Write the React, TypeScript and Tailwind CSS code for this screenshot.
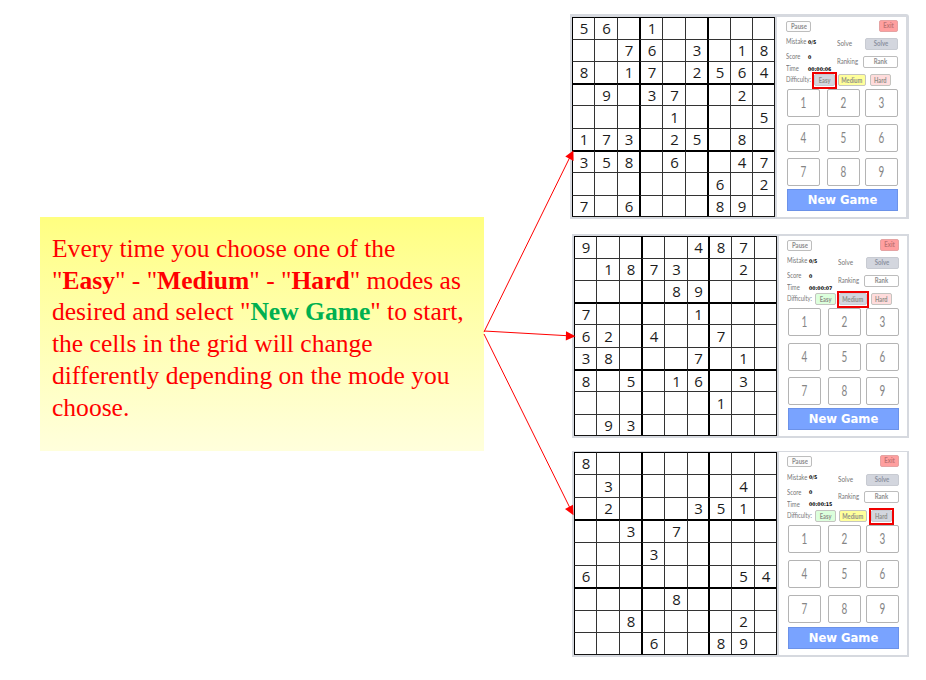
import type { ReactNode } from "react";

type Mode = "Easy" | "Medium" | "Hard";

type BoardData = {
  mode: Mode;
  time: string;
  rows: string[];
  frame: string;
  colTracks: string;
  rowTracks: string;
  panel: string;
  info: string;
  keys: string;
};

const boards: BoardData[] = [
  {
    mode: "Easy",
    time: "00:00:06",
    rows: ["56.1.....", "..76.3.18", "8.17.2564", ".9.37..2.", "....1...5", "173.25.8.", "358.6..47", "......6.2", "7.6...89."],
    frame: "mt-[14px] w-[339px] h-[205px] pl-[2px] pt-[3px] rounded-tr-[3px]",
    colTracks: "grid-cols-[22px_23px_22px_23px_23px_22px_23px_22px_22px]",
    rowTracks: "grid-rows-[22px_22px_22px_22px_23px_22px_22px_23px_21px]",
    panel: "ml-[2px] w-[129px] h-[200px] pl-[10px]",
    info: "h-[42px]",
    keys: "mt-[3px] mb-[3px] gap-y-[6.5px]",
  },
  {
    mode: "Medium",
    time: "00:00:07",
    rows: ["9....487.", ".1873..2.", "....89...", "7....1...", "62.4..7..", "38...7.1.", "8.5.16.3.", "......1..", ".93......"],
    frame: "mt-[15px] w-[337px] h-[204px] pl-[2px] pt-[2px]",
    colTracks: "grid-cols-[22px_23px_22px_23px_23px_21px_23px_23px_22px]",
    rowTracks: "grid-rows-[22px_22px_22px_22px_23px_22px_22px_23px_21px]",
    panel: "ml-[2px] w-[128px] h-[200px] pl-[9px]",
    info: "h-[42px]",
    keys: "mt-[3px] mb-[3px] gap-y-[6.5px]",
  },
  {
    mode: "Hard",
    time: "00:00:15",
    rows: ["8........", ".3.....4.", ".2...351.", "..3.7....", "...3.....", "6......54", "....8....", "..8....2.", "...6..89."],
    frame: "mt-[13px] w-[337px] h-[206px] pl-[2px] pt-[1px]",
    colTracks: "grid-cols-[22px_23px_22px_23px_23px_21px_23px_23px_22px]",
    rowTracks: "grid-rows-[22px_23px_22px_23px_23px_22px_23px_22px_22px]",
    panel: "ml-[2px] w-[128px] h-[203px] pl-[9px]",
    info: "h-[43px] pt-[0.5px]",
    keys: "mt-[3px] mb-[4px] gap-y-[7px]",
  },
];

function Narrow({ children, className = "" }: { children: ReactNode; className?: string }) {
  return <span className={`inline-block whitespace-nowrap ${className}`}>{children}</span>;
}

function SudokuGrid({ data }: { data: BoardData }) {
  return (
    <div className={`grid shrink-0 border-r border-b border-[#151515] bg-white ${data.colTracks} ${data.rowTracks}`}>
      {data.rows.flatMap((row, r) =>
        row.split("").map((d, c) => (
          <div
            key={`${r}-${c}`}
            className={`flex items-center justify-center overflow-hidden pl-px font-['Open_Sans','Noto_Sans',sans-serif] text-[15px] leading-none text-[#1c1c1c] ${
              c === 3 || c === 6 ? "border-l-2 border-l-black" : c === 0 ? "border-l border-l-black" : "border-l border-l-[#333]"
            } ${r === 3 || r === 6 ? "border-t-2 border-t-black" : r === 0 ? "border-t border-t-black" : "border-t border-t-[#333]"}`}
          >
            {d === "." ? "" : d}
          </div>
        )),
      )}
    </div>
  );
}

function ModeButton({ name, active, className }: { name: Mode; active: boolean; className: string }) {
  const tint = { Easy: "bg-[#dcffdc]", Medium: "bg-[#ffff9b]", Hard: "bg-[#ffdcdc]" }[name];
  return (
    <div
      className={`relative flex h-[12px] items-center justify-center rounded-[2px] border pt-px text-[7.5px] font-bold leading-none text-[#8e8e88] ${
        active ? "border-[#c8cbd2] bg-[#d3d6de]" : `border-[#c4c4c0] ${tint}`
      } ${className}`}
    >
      <Narrow className="scale-x-[.76]">{name}</Narrow>
      {active && <span className="absolute -inset-x-[3px] -top-[3px] -bottom-[4px] border-2 border-[#f00000]" />}
    </div>
  );
}

function Stat({ label, value, className }: { label: string; value: string; className: string }) {
  return (
    <div className={`flex items-center leading-none ${className}`}>
      <span className="w-[22px] pl-px">
        <Narrow className="origin-left scale-x-[.78]">{label}</Narrow>
      </span>
      <Narrow className="origin-left scale-x-[.94] pl-px font-['DejaVu_Sans',sans-serif] text-[5px] font-bold text-black">{value}</Narrow>
    </div>
  );
}

function ControlPanel({ data }: { data: BoardData }) {
  return (
    <div className={`shrink-0 bg-white pt-[4px] font-['Lato','Liberation_Sans',sans-serif] text-[7.5px] text-[#777] ${data.panel}`}>
      <div className="flex w-[111px] justify-between">
        <div className="-ml-px flex h-[11px] w-[25px] items-center justify-center rounded-[2px] border border-[#bdbdbd] bg-[#fcfcfc] font-bold leading-none text-[#8c8c8c]">
          <Narrow className="scale-x-[.8]">Pause</Narrow>
        </div>
        <div className="-mt-px flex h-[12px] w-[19px] items-center justify-center rounded-[2px] border border-[#e5a3a3] bg-[#ff9f9f] font-bold leading-none text-[#bd7474]">
          <Narrow className="scale-x-[.8]">Exit</Narrow>
        </div>
      </div>
      <div className={`-ml-[2px] flex w-[113px] ${data.info}`}>
        <div className="w-[52px]">
          <Stat label="Mistake" value="0/5" className="mt-[6px] h-[8px]" />
          <Stat label="Score" value="0" className="mt-[7px] h-[8px]" />
          <Stat label="Time" value={data.time} className="mt-[4px] h-[8px]" />
        </div>
        <div className="w-[61px]">
          <div className="mt-[6px] flex h-[12px] items-center justify-between leading-none">
            <Narrow className="origin-left scale-x-[.85]">Solve</Narrow>
            <div className="flex h-[12px] w-[33px] items-center justify-center rounded-[2px] border border-[#c8cbd2] bg-[#d3d6de] font-bold text-[#8a919e]">
              <Narrow className="scale-x-[.8]">Solve</Narrow>
            </div>
          </div>
          <div className="mt-[5px] flex h-[13px] items-center justify-between leading-none">
            <Narrow className="origin-left scale-x-[.8]">Ranking</Narrow>
            <div className="-ml-[10px] flex h-[12px] w-[35px] items-center justify-center rounded-[2px] border border-[#bdbdbd] bg-white font-bold text-[#8c8c8c]">
              <Narrow className="scale-x-[.8]">Rank</Narrow>
            </div>
          </div>
        </div>
      </div>
      <div className="-ml-[2px] flex h-[12px] items-center leading-none">
        <span className="w-[29px] shrink-0 pl-px">
          <Narrow className="origin-left scale-x-[.78]">Difficulty:</Narrow>
        </span>
        <ModeButton name="Easy" active={data.mode === "Easy"} className="w-[21px]" />
        <ModeButton name="Medium" active={data.mode === "Medium"} className="ml-[3px] w-[28px]" />
        <ModeButton name="Hard" active={data.mode === "Hard"} className="ml-[4px] w-[21px]" />
      </div>
      <div className={`grid w-[111px] grid-cols-[40px_38px_33px] justify-start ${data.keys}`}>
        {[1, 2, 3, 4, 5, 6, 7, 8, 9].map((n) => (
          <div key={n} className="flex h-[28px] w-[33px] items-center justify-center rounded-[2px] border border-[#b4b4b4] bg-white pb-px text-[15px] leading-none text-[#858585]">
            <Narrow className="scale-x-[.66]">{n}</Narrow>
          </div>
        ))}
      </div>
      <div className="flex h-[22px] w-[111px] items-center justify-center border border-[#6c92e8] bg-[#79a3ff] pt-[2px] font-['DejaVu_Sans',sans-serif] text-[11.6px] font-bold leading-none text-white">
        New Game
      </div>
    </div>
  );
}

export default function App() {
  return (
    <div className="relative flex h-[680px] w-[926px] overflow-hidden bg-white">
      <section className="ml-[40px] mt-[217px] h-[234px] w-[444px] shrink-0 bg-linear-to-b from-[#ffff80] to-[#ffffdc] pl-[12px] pt-[15.6px] font-['Liberation_Serif',serif] text-[25.55px] leading-[31.9px] text-[#ff0000]">
        <p className="whitespace-nowrap">
          Every time you choose one of the
          <br />"<b>Easy</b>" - "<b>Medium</b>" - "<b>Hard</b>" modes as
          <br />
          desired and select "<b className="text-[#00b050]">New Game</b>" to start,
          <br />
          the cells in the grid will change
          <br />
          differently depending on the mode you
          <br />
          choose.
        </p>
      </section>
      <div className="flex w-[425px] shrink-0 flex-col items-end">
        {boards.map((b) => (
          <section key={b.mode} className={`flex shrink-0 items-start bg-[#d6d9df] ${b.frame}`}>
            <SudokuGrid data={b} />
            <ControlPanel data={b} />
          </section>
        ))}
      </div>
      <svg className="absolute left-0 top-0" width="926" height="680" viewBox="0 0 926 680" fill="#ff0000" stroke="none">
        <g stroke="#ff0000" strokeWidth="1">
          <path d="M484 332 569.5 158" />
          <path d="M484 331 567 335.7" />
          <path d="M484 334 569.5 507" />
        </g>
        <path d="M573.4 150.5 565.3 156.5 573.6 161Z" />
        <path d="M575.5 336.2 566 331.2 565.8 340.4Z" />
        <path d="M573.5 515.3 565 509 573 504.7Z" />
      </svg>
    </div>
  );
}
